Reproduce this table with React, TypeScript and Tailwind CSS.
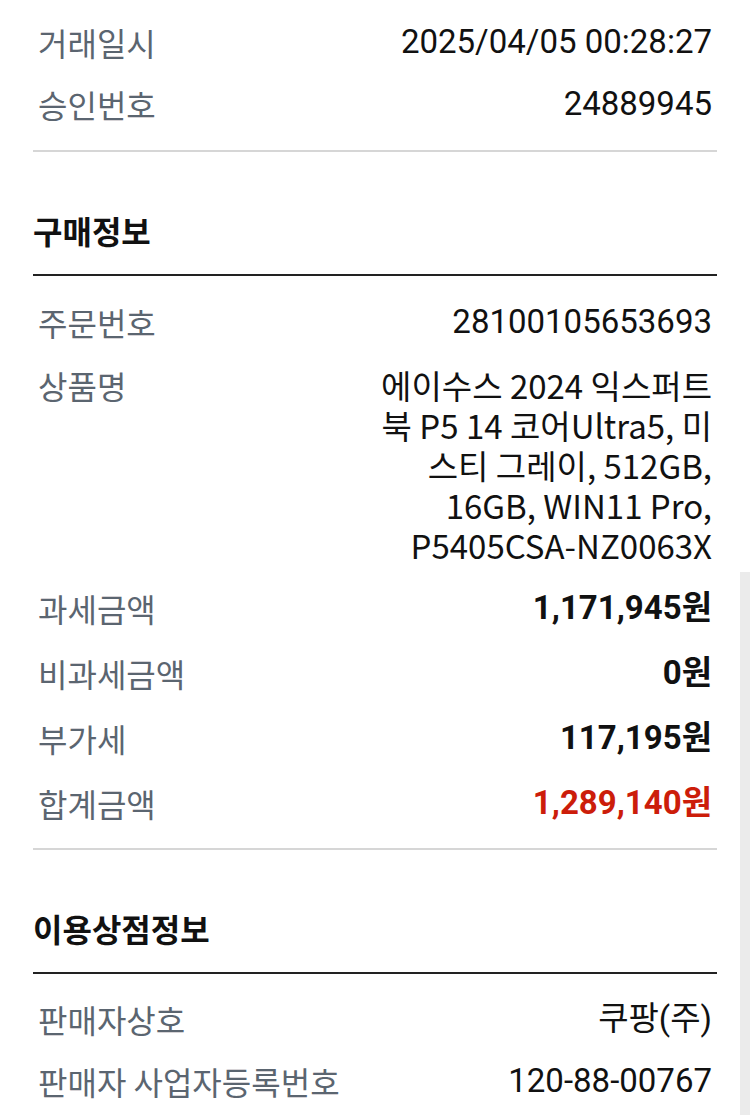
const label = "text-[32px] text-[#5b6570] font-['Noto_Sans_CJK_KR',sans-serif]";
const num = "text-[33px] text-[#111] font-['Roboto','Noto_Sans_CJK_KR',sans-serif]";
const amount = "text-[33px] font-bold font-['Roboto','Noto_Sans_CJK_KR',sans-serif]";

const Row = ({ name, value, cls = num }: { name: string; value: string; cls?: string }) => (
  <div className="flex h-[62px] items-center justify-between px-[5px]">
    <span className={label}>{name}</span>
    <span className={cls}>{value}</span>
  </div>
);

const AmountRow = ({ name, value, red }: { name: string; value: string; red?: boolean }) => (
  <div className="flex h-[65px] items-center justify-between px-[5px]">
    <span className={label}>{name}</span>
    <span className={`${amount} ${red ? "text-[#cc1d0a]" : "text-[#111]"}`}>{value}</span>
  </div>
);

const Heading = ({ title }: { title: string }) => (
  <div className="pt-[58px] pb-[24px]">
    <h2 className="text-[32px] leading-[40px] font-bold text-[#111] font-['Noto_Sans_CJK_KR',sans-serif]">
      {title}
    </h2>
  </div>
);

const App = () => {
  return (
    <div className="relative min-h-[1115px] w-[750px] overflow-hidden bg-white">
      <div className="mx-[33px] pt-[11px]">
        <Row name="거래일시" value="2025/04/05 00:28:27" />
        <Row name="승인번호" value="24889945" />
        <div className="mt-[15px] h-[2px] bg-[#d6d6d6]" />

        {/* 구매정보 */}
        <Heading title="구매정보" />
        <div className="h-[2px] bg-[#222]" />
        <div className="mt-[15px]">
          <Row name="주문번호" value="28100105653693" />
        </div>
        <div className="flex justify-between px-[5px] pt-[12px] pb-[10px]">
          <span className={`${label} leading-[40px]`}>상품명</span>
          <div className="text-right text-[33px] leading-[40px] text-[#111] font-['Noto_Sans_CJK_KR',sans-serif]">
            <div>에이수스 2024 익스퍼트</div>
            <div>북 P5 14 코어Ultra5, 미</div>
            <div>스티 그레이, 512GB,</div>
            <div>16GB, WIN11 Pro,</div>
            <div>P5405CSA-NZ0063X</div>
          </div>
        </div>
        <AmountRow name="과세금액" value="1,171,945원" />
        <AmountRow name="비과세금액" value="0원" />
        <AmountRow name="부가세" value="117,195원" />
        <AmountRow name="합계금액" value="1,289,140원" red />
        <div className="mt-[13px] h-[2px] bg-[#d6d6d6]" />

        {/* 이용상점정보 */}
        <Heading title="이용상점정보" />
        <div className="h-[2px] bg-[#222]" />
        <div className="mt-[14px]">
          <Row name="판매자상호" value="쿠팡(주)" />
          <Row name="판매자 사업자등록번호" value="120-88-00767" />
        </div>
      </div>

      {/* scrollbar track */}
      <div className="absolute right-0 top-[572px] bottom-0 w-[10px] bg-[#ebebeb]" />
    </div>
  );
};

export default App;
